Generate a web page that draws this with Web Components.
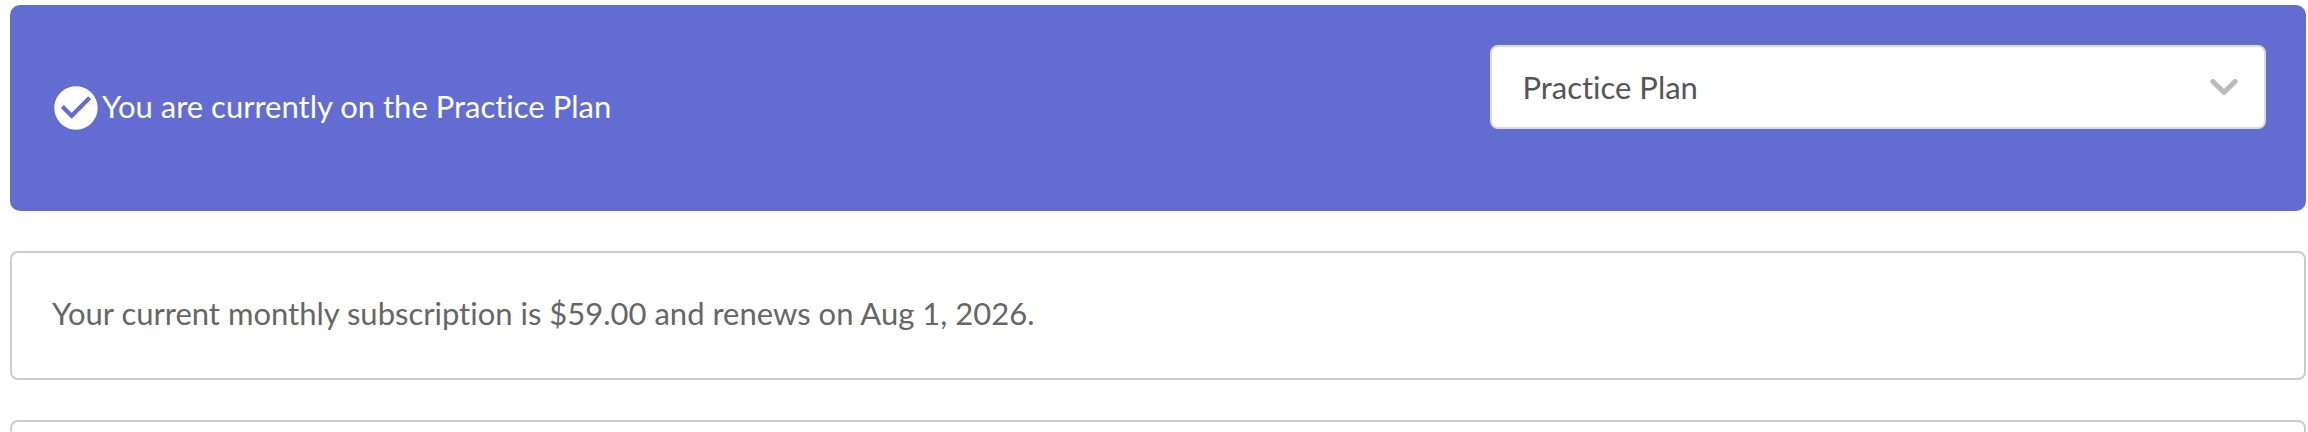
<!DOCTYPE html>
<html lang="en">
<head>
<meta charset="utf-8">
<meta name="viewport" content="width=device-width, initial-scale=1">
<title>Subscription</title>
<style>
  body {
    margin: 0;
    background: #fff;
    font: 31px/45px Lato, "Open Sans", sans-serif;
    font-variant-ligatures: none;
    overflow: hidden;
  }
</style>
</head>
<body>
<subscription-page>
  <plan-banner>
    <check-icon slot="icon"></check-icon>
    You are currently on the Practice Plan
    <plan-select slot="action"></plan-select>
  </plan-banner>
  <info-card>Your current monthly subscription is $59.00 and renews on Aug 1, 2026.</info-card>
  <info-card></info-card>
</subscription-page>

<script>
class SubscriptionPage extends HTMLElement {
  constructor() {
    super();
    this.attachShadow({ mode: "open" });
  }

  static get styles() {
    return /* css */`
      :host {
        display: flex;
        flex-direction: column;
        gap: 40px;
        padding: 5px 2px 0 10px;
      }
    `;
  }

  connectedCallback() {
    this.shadowRoot.innerHTML = /* html */`
    <style>${SubscriptionPage.styles}</style>
    <slot></slot>`;
  }
}

class PlanBanner extends HTMLElement {
  constructor() {
    super();
    this.attachShadow({ mode: "open" });
  }

  static get styles() {
    return /* css */`
      :host {
        display: flex;
        align-items: center;
        justify-content: space-between;
        padding: 40px;
        background: #636dd1;
        border-radius: 10px;
        color: #fff;
      }

      .status {
        display: flex;
        align-items: center;
        margin: 0;
      }

      .label {
        padding-bottom: 4px;
      }

      .action {
        width: 35%;
        padding-bottom: 42px;
      }
    `;
  }

  connectedCallback() {
    this.shadowRoot.innerHTML = /* html */`
    <style>${PlanBanner.styles}</style>
    <p class="status">
      <slot name="icon"></slot>
      <span class="label"><slot></slot></span>
    </p>
    <div class="action"><slot name="action"></slot></div>`;
  }
}

class CheckIcon extends HTMLElement {
  constructor() {
    super();
    this.attachShadow({ mode: "open" });
  }

  static get styles() {
    return /* css */`
      :host {
        display: block;
      }

      svg {
        display: block;
        width: 52px;
        height: 52px;
        fill: currentColor;
      }
    `;
  }

  connectedCallback() {
    this.shadowRoot.innerHTML = /* html */`
    <style>${CheckIcon.styles}</style>
    <svg viewBox="0 0 24 24" aria-hidden="true">
      <path d="M12 2C6.48 2 2 6.48 2 12s4.48 10 10 10 10-4.48 10-10S17.52 2 12 2zm-2 15l-5-5 1.41-1.41L10 14.17l7.59-7.59L19 8l-9 9z"/>
    </svg>`;
  }
}

class PlanSelect extends HTMLElement {
  constructor() {
    super();
    this.attachShadow({ mode: "open" });
  }

  static get styles() {
    return /* css */`
      :host {
        display: grid;
        align-items: center;
      }

      /* the arrow shares the grid cell of the select */
      select,
      svg {
        grid-area: 1 / 1;
      }

      select {
        appearance: none;
        box-sizing: border-box;
        width: 100%;
        height: 84px;
        margin: 0;
        padding: 0 80px 0 30px;
        background: #fff;
        border: 2px solid #dcdcdc;
        border-radius: 8px;
        color: #555;
        font: inherit;
        font-variant-ligatures: none;
      }

      svg {
        justify-self: end;
        width: 28px;
        height: 16px;
        margin-right: 28px;
        fill: none;
        stroke: #bbb;
        stroke-width: 5;
        stroke-linecap: round;
        stroke-linejoin: round;
        pointer-events: none;
      }
    `;
  }

  connectedCallback() {
    this.shadowRoot.innerHTML = /* html */`
    <style>${PlanSelect.styles}</style>
    <select aria-label="Plan">
      <option>Practice Plan</option>
    </select>
    <svg viewBox="0 0 28 16" aria-hidden="true">
      <path d="M3 2.5l11 11 11-11"/>
    </svg>`;
  }
}

class InfoCard extends HTMLElement {
  constructor() {
    super();
    this.attachShadow({ mode: "open" });
  }

  static get styles() {
    return /* css */`
      :host {
        display: block;
        padding: 38px 40px 42px;
        border: 2px solid #ccc;
        border-radius: 8px;
        color: #666;
      }

      p {
        min-height: 45px;
        margin: 0;
      }
    `;
  }

  connectedCallback() {
    this.shadowRoot.innerHTML = /* html */`
    <style>${InfoCard.styles}</style>
    <p><slot></slot></p>`;
  }
}

customElements.define("subscription-page", SubscriptionPage);
customElements.define("plan-banner", PlanBanner);
customElements.define("check-icon", CheckIcon);
customElements.define("plan-select", PlanSelect);
customElements.define("info-card", InfoCard);
</script>
</body>
</html>
